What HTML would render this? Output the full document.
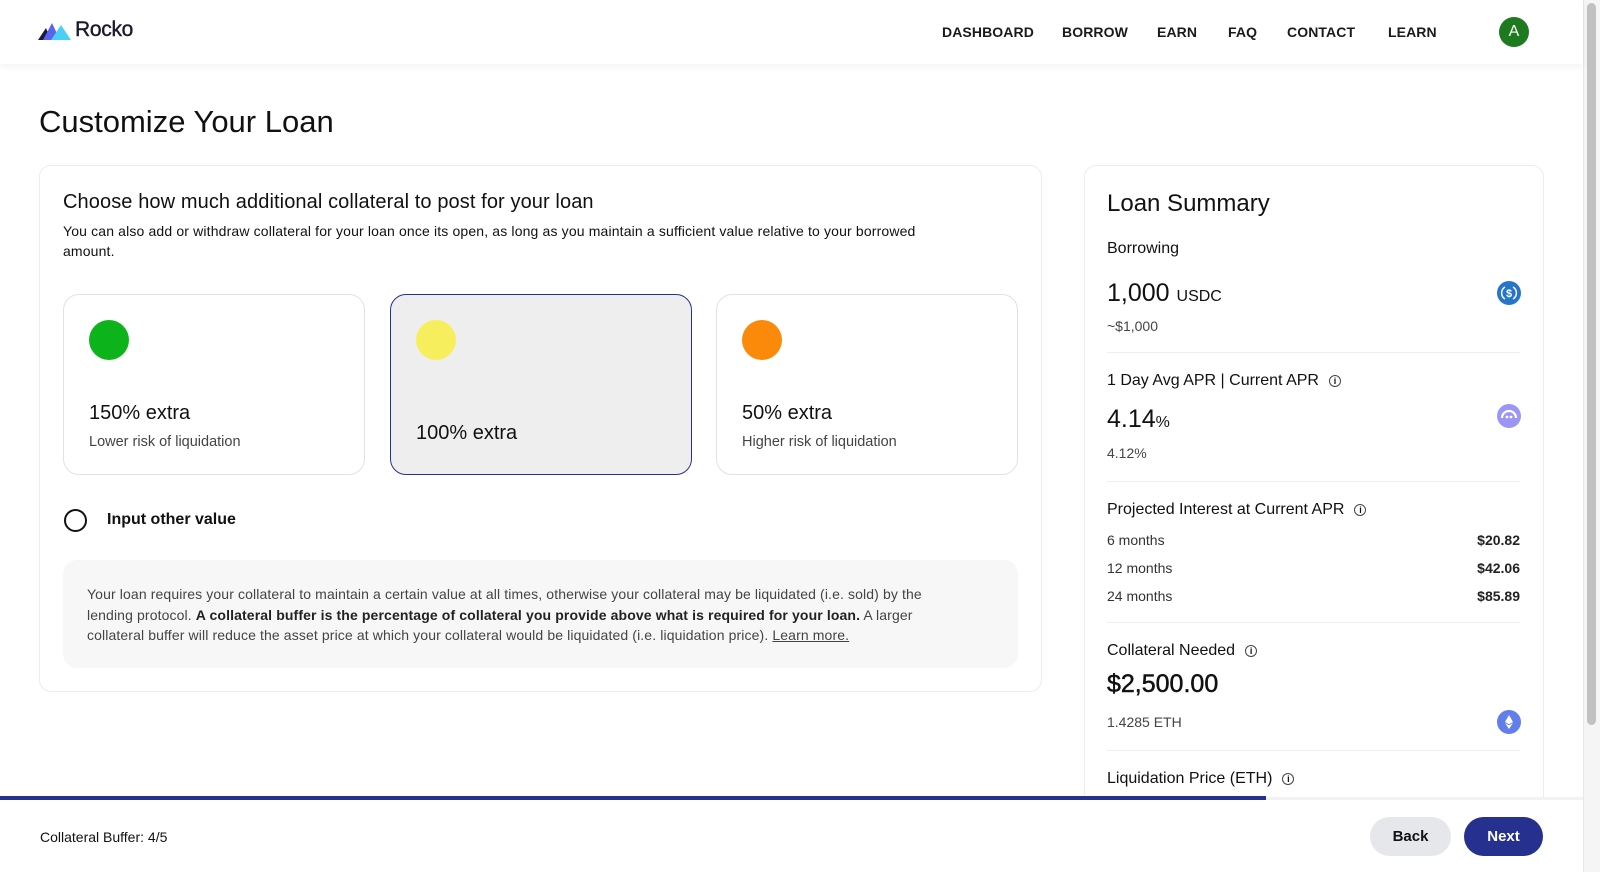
<!DOCTYPE html>
<html><head><meta charset="utf-8"><style>
*{box-sizing:border-box;margin:0;padding:0}
body{width:1600px;height:872px;overflow:hidden;background:#fff;font-family:"Liberation Sans",Arial,sans-serif;color:#111;position:relative}
.hdr{position:absolute;left:0;top:0;width:1583px;height:64px;background:#fff;box-shadow:0 2px 8px rgba(0,0,0,.06);z-index:2}
.logo{position:absolute;left:38px;top:18px;display:flex;align-items:center}
.logo span{font-size:21px;font-weight:400;margin-left:3px;letter-spacing:-.3px;color:#1a1a2a;-webkit-text-stroke:.4px #1a1a2a}
.nav{position:absolute;top:24px;font-size:14px;font-weight:700;letter-spacing:.1px;color:#1a1a1a}
.av{position:absolute;left:1499px;top:17px;width:30px;height:30px;border-radius:50%;background:#1e7a1e;color:#fff;font-size:16px;text-align:center;line-height:30px}
h1{position:absolute;left:39px;top:104px;font-size:31px;font-weight:400}
.card{position:absolute;border:1px solid #ececec;border-radius:12px;background:#fff}
.opt{position:absolute;top:294px;width:302px;height:181px;border:1.5px solid #e2e2e2;border-radius:16px;background:#fff}
.opt .d{position:absolute;left:25px;top:25px;width:40px;height:40px;border-radius:50%}
.opt .t{position:absolute;left:25px;top:107px;font-size:20px}
.opt .s{position:absolute;left:25px;top:139px;font-size:14.5px;color:#444}
.row{position:absolute;left:1107px;width:413px;font-size:14px;color:#333;display:flex;justify-content:space-between}
.row b{font-weight:700;color:#222}
.hr{position:absolute;left:1107px;width:413px;height:1px;background:#eee}
.info{display:inline-block;width:12px;height:12px;border:1.3px solid #444;border-radius:50%;font-size:9px;text-align:center;line-height:10px;margin-left:10px;vertical-align:1px;font-weight:700}
.lbl{position:absolute;left:1107px;font-size:16px;color:#111}
</style></head><body>
<div class="hdr">
 <div class="logo"><svg width="34" height="20" viewBox="0 0 34 20"><polygon points="0,20 8,8 13,20" fill="#1a1a3a"/><polygon points="5,20 14,3 22,20" fill="#5a63f0"/><polygon points="13,20 23,5 33,20" fill="#4ad0f5"/></svg><span>Rocko</span></div>
 <div class="nav" style="left:942px">DASHBOARD</div>
 <div class="nav" style="left:1062px">BORROW</div>
 <div class="nav" style="left:1157px">EARN</div>
 <div class="nav" style="left:1228px">FAQ</div>
 <div class="nav" style="left:1287px">CONTACT</div>
 <div class="nav" style="left:1388px">LEARN</div>
 <div class="av">A</div>
</div>
<h1>Customize Your Loan</h1>
<div class="card" style="left:39px;top:165px;width:1003px;height:527px"></div>
<div style="position:absolute;left:63px;top:191px;font-size:20px;font-weight:500;letter-spacing:.1px">Choose how much additional collateral to post for your loan</div>
<div style="position:absolute;left:63px;top:221px;width:900px;font-size:14px;line-height:20px;letter-spacing:.15px">You can also add or withdraw collateral for your loan once its open, as long as you maintain a sufficient value relative to your borrowed amount.</div>
<div class="opt" style="left:63px"><div class="d" style="background:#0cb31a"></div><div class="t">150% extra</div><div class="s">Lower risk of liquidation</div></div>
<div class="opt" style="left:390px;background:#eeeeee;border-color:#26318f"><div class="d" style="background:#f7ee5e"></div><div class="t" style="top:127px">100% extra</div></div>
<div class="opt" style="left:716px"><div class="d" style="background:#fb8a0a"></div><div class="t">50% extra</div><div class="s">Higher risk of liquidation</div></div>
<div style="position:absolute;left:64px;top:509px;width:23px;height:23px;border:2px solid #111;border-radius:50%"></div>
<div style="position:absolute;left:107px;top:511px;font-size:16px;font-weight:700">Input other value</div>
<div style="position:absolute;left:63px;top:560px;width:955px;height:108px;background:#f7f7f7;border-radius:14px;padding:24px 50px 24px 24px;font-size:14px;line-height:20.5px;color:#444;letter-spacing:.12px">Your loan requires your collateral to maintain a certain value at all times, otherwise your collateral may be liquidated (i.e. sold) by the lending protocol. <b style="color:#222">A collateral buffer is the percentage of collateral you provide above what is required for your loan.</b> A larger collateral buffer will reduce the asset price at which your collateral would be liquidated (i.e. liquidation price). <u>Learn more.</u></div>

<div class="card" style="left:1084px;top:165px;width:460px;height:700px"></div>
<div class="lbl" style="top:190px;font-size:24px;font-weight:500">Loan Summary</div>
<div class="lbl" style="top:240px">Borrowing</div>
<div class="lbl" style="top:279px;font-size:25px;font-weight:500">1,000 <span style="font-size:16px">USDC</span></div>
<svg style="position:absolute;left:1497px;top:281px" width="24" height="24" viewBox="0 0 24 24"><circle cx="12" cy="12" r="12" fill="#2775ca"/><path d="M8 6a7 7 0 0 0 0 12M16 6a7 7 0 0 1 0 12" stroke="#fff" stroke-width="1.5" fill="none"/><text x="12" y="16" font-size="11" fill="#fff" text-anchor="middle" font-family="Liberation Sans" font-weight="700">$</text></svg>
<div class="lbl" style="top:318px;font-size:14px;color:#444">~$1,000</div>
<div class="hr" style="top:352px"></div>
<div class="lbl" style="top:372px">1 Day Avg APR | Current APR<span class="info">i</span></div>
<div class="lbl" style="top:405px;font-size:25px;font-weight:500">4.14<span style="font-size:16px">%</span></div>
<svg style="position:absolute;left:1497px;top:404px" width="24" height="24" viewBox="0 0 24 24"><circle cx="12" cy="12" r="12" fill="#9b96f5"/><path d="M5 14a7 7 0 0 1 14 0" stroke="#fff" stroke-width="2.2" fill="none"/><circle cx="10" cy="13" r="1.4" fill="#fff"/><circle cx="14" cy="13" r="1.4" fill="#fff"/></svg>
<div class="lbl" style="top:445px;font-size:14px;color:#444">4.12%</div>
<div class="hr" style="top:481px"></div>
<div class="lbl" style="top:501px">Projected Interest at Current APR<span class="info">i</span></div>
<div class="row" style="top:532px"><span>6 months</span><b>$20.82</b></div>
<div class="row" style="top:560px"><span>12 months</span><b>$42.06</b></div>
<div class="row" style="top:588px"><span>24 months</span><b>$85.89</b></div>
<div class="hr" style="top:622px"></div>
<div class="lbl" style="top:642px">Collateral Needed<span class="info">i</span></div>
<div class="lbl" style="top:670px;font-size:25px;font-weight:400;-webkit-text-stroke:.5px #111">$2,500.00</div>
<div class="lbl" style="top:714px;font-size:14px;color:#444">1.4285 ETH</div>
<svg style="position:absolute;left:1497px;top:710px" width="24" height="24" viewBox="0 0 24 24"><circle cx="12" cy="12" r="12" fill="#627eea"/><path d="M12 5l-4 7 4 2.3 4-2.3z M12 15.3l-4-2.3 4 6 4-6z" fill="#fff"/></svg>
<div class="hr" style="top:750px"></div>
<div class="lbl" style="top:770px">Liquidation Price (ETH)<span class="info">i</span></div>

<div style="position:absolute;left:0;top:797px;width:1583px;height:75px;background:#fff;border-top:3px solid #f2f2f2"></div>
<div style="position:absolute;left:0;top:796px;width:1266px;height:4px;background:#26318f"></div>
<div style="position:absolute;left:40px;top:829px;font-size:14px">Collateral Buffer: 4/5</div>
<div style="position:absolute;left:1370px;top:817px;width:81px;height:39px;border-radius:20px;background:#e6e7eb;font-size:15px;font-weight:700;text-align:center;line-height:39px">Back</div>
<div style="position:absolute;left:1464px;top:817px;width:79px;height:39px;border-radius:20px;background:#26318f;color:#fff;font-size:15px;font-weight:700;text-align:center;line-height:39px">Next</div>
<div style="position:absolute;left:1583px;top:0;width:17px;height:872px;background:#f5f5f5;border-left:1px solid #e8e8e8"></div>
<div style="position:absolute;left:1587px;top:3px;width:9px;height:722px;background:#c1c1c1;border-radius:5px"></div>
</body></html>
